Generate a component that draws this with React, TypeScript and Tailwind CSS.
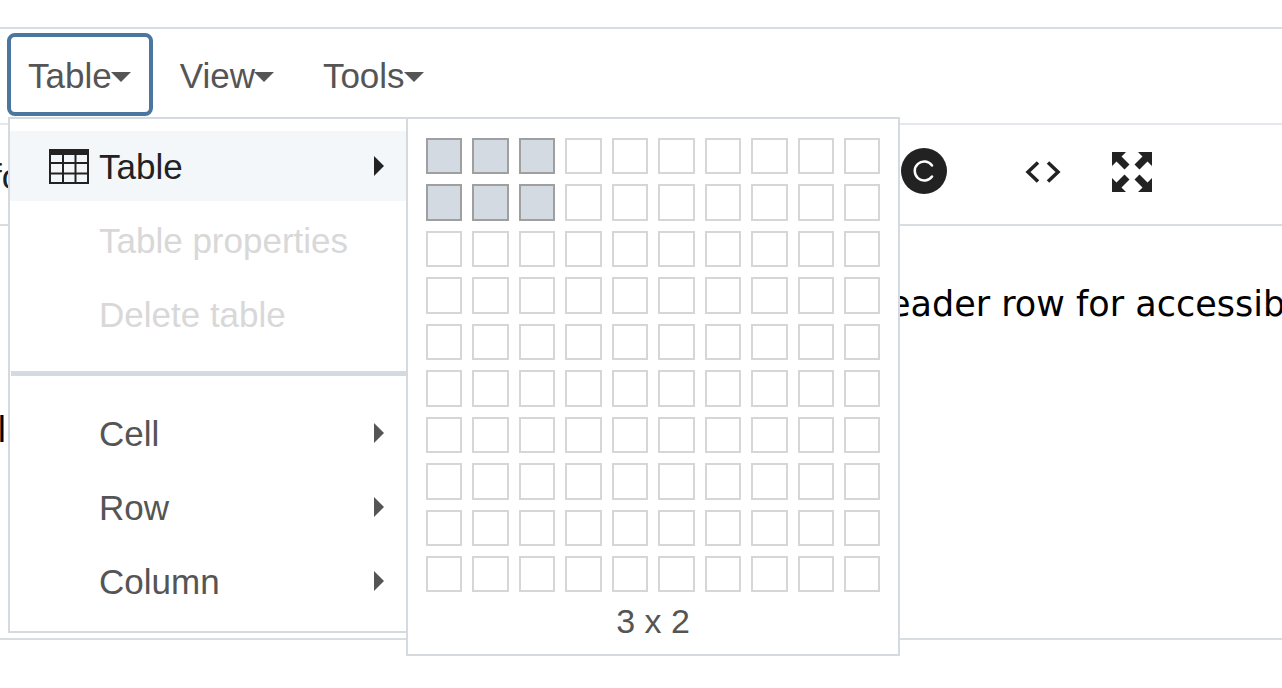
const sans = "font-['Liberation_Sans',Arial,sans-serif]";

const cols = Array.from({ length: 10 }, (_, i) => i);

function Caret() {
    return <span className="-ml-px mt-[1px] inline-block h-0 w-0 border-x-10 border-t-10 border-x-transparent border-t-[#555]" />;
}

function MenuButton({ label, active }: { label: string; active?: boolean }) {
    return (
        <div className={`flex h-[83px] items-center rounded-lg border-4 pl-[17px] pr-[18px] pt-1 ${active ? "border-[#4a76a0]" : "border-transparent"}`}>
            <span>{label}</span>
            <Caret />
        </div>
    );
}

function MenuItem({ label, hasArrow, disabled, active, icon }: { label: string; hasArrow?: boolean; disabled?: boolean; active?: boolean; icon?: boolean }) {
    return (
        <div className={`flex h-[70px] items-center pr-[22px] ${active ? "bg-[#f4f7fa] text-[#222]" : disabled ? "text-[#d8d8d8]" : "text-[#555]"}`}>
            <div className="flex w-[89px] shrink-0 justify-end pr-[10px]">
                {icon && (
                    <svg width="40" height="35" viewBox="0 0 40 35" fill="none" stroke="#222" strokeWidth="2">
                        <rect x="1" y="1" width="38" height="33" />
                        <rect x="0" y="0" width="40" height="6" fill="#222" stroke="none" />
                        <path d="M14 1v33M26.500 1v33M1 14h38M1 24.500h38" />
                    </svg>
                )}
            </div>
            <span className="flex-1 pt-[2px]">{label}</span>
            {hasArrow && <span className={`h-0 w-0 border-y-10 border-l-10 border-y-transparent ${active ? "border-l-[#222]" : "border-l-[#555]"}`} />}
        </div>
    );
}

function CopyrightIcon() {
    return (
        <div className="flex h-[46px] w-[46px] items-center justify-center rounded-full bg-[#222]">
            <svg width="22" height="22" viewBox="0 0 22 22" fill="none" stroke="white" strokeWidth="2.500" strokeLinecap="round">
                <path d="M19 5.500A9.500 9.500 0 1 0 19 16.500" />
            </svg>
        </div>
    );
}

function CodeIcon() {
    return (
        <svg width="36" height="22" viewBox="0 0 36 22" fill="none" stroke="#222" strokeWidth="3.500">
            <path d="M13 1.500 3 11l10 9.500" />
            <path d="M23 1.500 33 11l-10 9.500" />
        </svg>
    );
}

function FullscreenIcon() {
    return (
        <svg width="40" height="40" viewBox="0 0 40 40" fill="#222">
            <path d="M0 0h14l-4.500 4.500 8 8-5 5-8-8L0 14z" />
            <path d="M40 0H26l4.500 4.500-8 8 5 5 8-8L40 14z" />
            <path d="M0 40h14l-4.500-4.500 8-8-5-5-8 8L0 26z" />
            <path d="M40 40H26l4.500-4.500-8-8 5-5 8 8L40 26z" />
        </svg>
    );
}

export default function App() {
    return (
        <div className={`relative h-[688px] w-[1282px] overflow-hidden bg-white ${sans} text-[35px] text-[#555]`}>
            <div className="h-[29px] border-b-2 border-[#d8dde2]" />

            {/* Menubar */}
            <div className="flex h-[96px] items-start border-b-2 border-[#e4e8ec] pl-[7px] pt-[4px]">
                <MenuButton label="Table" active />
                <div className="ml-[6px]"><MenuButton label="View" /></div>
                <div className="ml-[6px]"><MenuButton label="Tools" /></div>
            </div>

            {/* Toolbar */}
            <div className="flex h-[101px] items-center whitespace-nowrap border-b-2 border-[#d8dde2] pb-[5px]">
                <span className="-ml-2 mt-[10px] w-[22px] shrink-0 text-[#222]">fo</span>
                <div className="-mt-[2px] ml-[887px]"><CopyrightIcon /></div>
                <div className="ml-[78px]"><CodeIcon /></div>
                <div className="ml-[51px]"><FullscreenIcon /></div>
            </div>

            {/* Editor content */}
            <div className="h-[414px] whitespace-nowrap border-b-2 border-[#d8dde2] font-['DejaVu_Sans',sans-serif] text-[35px] text-black">
                <div className="pl-[889px] pt-[52px]">eader row for accessib</div>
                <div className="-ml-[3px] pt-[73px]">l</div>
            </div>

            {/* Table menu */}
            <div className="absolute left-2 top-[117px] h-[516px] w-[400px] border-2 border-[#d4dae0] bg-white pt-3">
                <MenuItem label="Table" icon active hasArrow />
                <div className="mt-[4px]"><MenuItem label="Table properties" disabled /></div>
                <div className="mt-[4px]"><MenuItem label="Delete table" disabled /></div>
                <div className="ml-px mt-[22px] h-[5px] bg-[#d4dae0]" />
                <div className="mt-[22px]"><MenuItem label="Cell" hasArrow /></div>
                <div className="mt-[4px]"><MenuItem label="Row" hasArrow /></div>
                <div className="mt-[4px]"><MenuItem label="Column" hasArrow /></div>
            </div>

            {/* Grid picker */}
            <div className="absolute left-[406px] top-[117px] h-[539px] w-[494px] border-2 border-[#d4dae0] bg-white px-[18px] pt-[19px]">
                <div className="grid grid-cols-[repeat(10,36.45px)] gap-[10px]">
                    {cols.map(row =>
                        cols.map(col => (
                            <div
                                key={`${row}-${col}`}
                                className={`h-[36.45px] border-2 ${row < 2 && col < 3 ? "border-[#9f9f9f] bg-[#d4dae1]" : "border-[#d6d6d6]"}`}
                            />
                        ))
                    )}
                </div>
                <div className="mt-1 text-center text-[34px]">3 x 2</div>
            </div>
        </div>
    );
}
